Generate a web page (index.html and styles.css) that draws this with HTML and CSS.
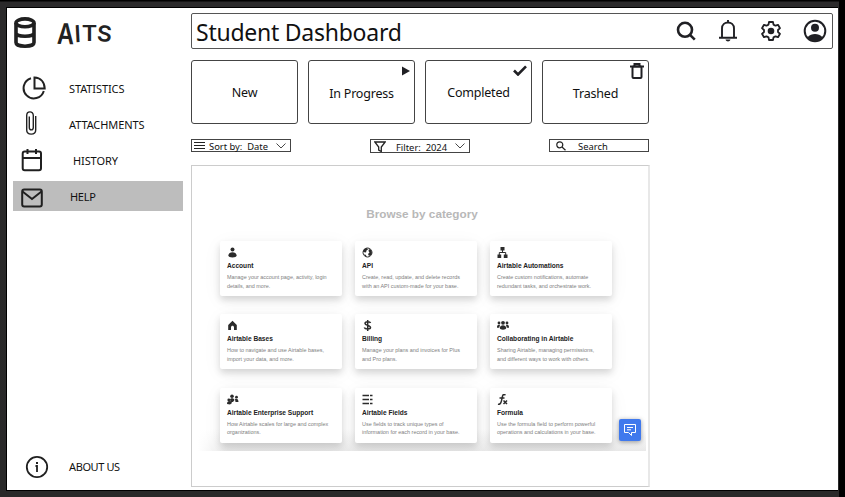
FILE: index.html
```html
<!DOCTYPE html>
<html lang="en">
<head>
<meta charset="utf-8">
<title>Student Dashboard</title>
<link rel="stylesheet" href="styles.css">
</head>
<body>
<div class="screen">
  <aside class="sidebar">
    <div class="brand">
      <svg width="24" height="32" viewBox="0 0 24 32" fill="none" stroke="#202020" stroke-width="3.6"><ellipse cx="12" cy="5.800" rx="9" ry="3.900"/><path d="M3 6v19.500c0 5 18 5 18 0V6M3 15.800c0 4.600 18 4.600 18 0"/></svg>
      <div class="brand-name"><span class="la">A</span><span class="li">I</span><span class="lt">T</span><span class="ls">S</span></div>
    </div>
    <nav class="nav">
      <a class="row statistics"><svg width="24" height="24" viewBox="0 0 24 24" fill="none" stroke="#222" stroke-width="2"><path d="M9 2.200A10.300 10.300 0 1 0 21.800 15M12.500 1.500v11h10.200C22.500 6 18.500 1.800 12.500 1.500z"/></svg><span>STATISTICS</span></a>
      <a class="row attachments"><svg width="12" height="24" viewBox="0 0 12 24" fill="none" stroke="#222" stroke-width="1.400"><path d="M10.700 5v14c0 5.500-9 5.500-9 0V4.500C1.700-.3 8.300-.3 8.300 4.500V16.500c0 3.200-4 3.200-4 0V5.500"/></svg><span>ATTACHMENTS</span></a>
      <a class="row history"><svg width="22" height="24" viewBox="0 0 22 24" fill="none" stroke="#202020" stroke-width="2"><rect x="1.700" y="3.500" width="18.300" height="18.800" rx="2"/><path d="M2 10h18M6.500 1v5M15 1v5"/></svg><span>HISTORY</span></a>
      <a class="row help"><svg width="22" height="20" viewBox="0 0 22 20" fill="none" stroke="#202020" stroke-width="2"><rect x="1.200" y="1.500" width="19.600" height="17" rx="2"/><path d="M1.500 3.500L11 11l9.500-7.500"/></svg><span>HELP</span></a>
    </nav>
    <a class="row about"><svg width="24" height="24" viewBox="0 0 24 24" fill="none" stroke="#202020" stroke-width="1.800"><circle cx="12" cy="12" r="10.200"/><path d="M10.500 11H12v6"/><path d="M12 7v2" stroke-width="2"/></svg><span>ABOUT US</span></a>
  </aside>

  <main class="main">
    <header class="topbar">
      <h1>Student Dashboard</h1>
      <div class="tools">
        <svg width="20" height="20" viewBox="0 0 20 20" fill="none" stroke="#202024" stroke-width="2.600"><circle cx="9" cy="8.800" r="7"/><path d="M14 13.800l4.800 4.800"/></svg>
        <svg width="20" height="24" viewBox="0 0 20 24" fill="none" stroke="#202024" stroke-width="1.900"><path d="M1 18.800h18M4 18.500V9.500C4 1.500 16 1.500 16 9.500v9M10 1v3"/><path d="M7.500 20.500h5c-.5 2.500-4.500 2.500-5 0z" fill="#202024" stroke="none"/></svg>
        <svg width="20" height="20" viewBox="0 0 20 20" fill="none" stroke="#202024" stroke-width="1.800"><path d="M8 1h4l.5 2.600 2 1.100L17 3.800l2 3.400-2 1.800v2l2 1.800-2 3.400-2.500-.9-2 1.100L12 19H8l-.5-2.600-2-1.100-2.500.9-2-3.400L3 11V9L1 7.200l2-3.400 2.500.9 2-1.100z" stroke-linejoin="round"/><circle cx="10" cy="10" r="3.300" fill="#202024" stroke="none"/></svg>
        <svg width="24" height="24" viewBox="0 0 24 24"><circle cx="12" cy="12" r="10.300" fill="none" stroke="#202024" stroke-width="2"/><circle cx="12" cy="8.800" r="4" fill="#202024"/><path d="M4.500 18.200c4-4.200 11-4.200 15 0-3.500 5-11.500 5-15 0z" fill="#202024"/></svg>
      </div>
    </header>

    <section class="status">
      <div class="tile new"><span>New</span></div>
      <div class="tile progress"><span>In Progress</span><svg class="mark" width="8" height="10" viewBox="0 0 8 10"><path d="M0 .5L8 5 0 9.500z" fill="#202024"/></svg></div>
      <div class="tile completed"><span>Completed</span><svg class="mark" width="14" height="11" viewBox="0 0 14 11"><path d="M1 5.500l4 4L13 1.300" fill="none" stroke="#202024" stroke-width="2.600"/></svg></div>
      <div class="tile trashed"><span>Trashed</span><svg class="mark" width="14" height="16" viewBox="0 0 14 16" fill="none" stroke="#202024" stroke-width="2"><path d="M0 3.500h14M4.500 3V1h5v2"/><rect x="2.500" y="3.500" width="9" height="11.500" rx="1"/></svg></div>
    </section>

    <section class="filters">
      <div class="control sort"><svg width="11" height="7" viewBox="0 0 11 7" stroke="#222" stroke-width="1"><path d="M0 .5h11M0 3.500h11M0 6.500h11"/></svg><span>Sort by:&nbsp; Date</span><svg class="chevron" width="10" height="6" viewBox="0 0 10 6" fill="none" stroke="#333" stroke-width=".9"><path d="M.5.5L5 5 9.500.5"/></svg></div>
      <div class="control filter"><svg width="12" height="11" viewBox="0 0 12 11" fill="none" stroke="#222" stroke-width="1.300"><path d="M.8 1h10.400L7.300 6v4.500L4.700 9V6z"/></svg><span>Filter:&nbsp; 2024</span><svg class="chevron" width="10" height="6" viewBox="0 0 10 6" fill="none" stroke="#333" stroke-width=".9"><path d="M.5.500L5 5 9.500.5"/></svg></div>
      <div class="control search"><svg width="10" height="10" viewBox="0 0 10 10" fill="none" stroke="#222" stroke-width="1.200"><circle cx="3.800" cy="3.800" r="3"/><path d="M6 6l3.500 3.300"/></svg><span>Search</span></div>
    </section>

    <section class="panel">
      <div class="help-center">
        <h2>Browse by category</h2>
        <div class="categories">
          <article><svg width="11" height="11" viewBox="0 0 11 11" fill="#2b2b2b"><circle cx="5.500" cy="2.500" r="2"/><path d="M1.300 8.500C1.500 4 9.500 4 9.700 8.500c0 2.500-8.400 2.500-8.400 0z"/></svg><h3>Account</h3><p>Manage your account page, activity, login<br>details, and more.</p></article>
          <article><svg width="11" height="11" viewBox="0 0 11 11"><circle cx="5.500" cy="5.500" r="4.500" fill="#fff" stroke="#2b2b2b"/><path d="M2 2l3-1 1 1.500-1.500 1-.5 2L1 5zM7 2l2 1 1 3-1 2-2 1-1-2 1.500-1.500L6.500 4zM2 7l2 1 .5 2L3 9z" fill="#2b2b2b"/></svg><h3>API</h3><p>Create, read, update, and delete records<br>with an API custom-made for your base.</p></article>
          <article><svg width="11" height="11" viewBox="0 0 11 11" fill="#2b2b2b"><path d="M3.500 0h4v3.500h-4zM.5 7.500h3.700V11H.5zM6.800 7.500h3.700V11H6.800z"/><path d="M5.500 3v2.500M2.300 8V5.500h6.400V8" fill="none" stroke="#2b2b2b"/></svg><h3>Airtable Automations</h3><p>Create custom notifications, automate<br>redundant tasks, and orchestrate work.</p></article>
          <article><svg width="11" height="11" viewBox="0 0 11 11" fill="#2b2b2b"><path d="M1.200 5L5.500.7 9.800 5v5H7V7.500C7 5.300 4 5.300 4 7.500V10H1.200z"/></svg><h3>Airtable Bases</h3><p>How to navigate and use Airtable bases,<br>import your data, and more.</p></article>
          <article><svg width="11" height="11" viewBox="0 0 11 11" fill="none" stroke="#2b2b2b" stroke-width="1.500"><path d="M8.500 3C8 1.300 3 1.300 3 3.500c0 2.300 5.500 1.500 5.500 4C8.500 9.500 3 9.500 2.300 7.500M5.700 0v11"/></svg><h3>Billing</h3><p>Manage your plans and invoices for Plus<br>and Pro plans.</p></article>
          <article><svg width="12" height="11" viewBox="0 0 12 11" fill="#2b2b2b"><circle cx="6" cy="2.800" r="1.900"/><circle cx="2" cy="3" r="1.400"/><circle cx="10" cy="3" r="1.400"/><path d="M2.800 8C3 4.300 9 4.300 9.200 8c0 2.300-6.400 2.300-6.400 0zM0 7c0-2 1.500-2.500 3-2L2.200 7.800H0zM12 7c0-2-1.500-2.500-3-2l.8 2.800H12z"/></svg><h3>Collaborating in Airtable</h3><p>Sharing Airtable, managing permissions,<br>and different ways to work with others.</p></article>
          <article><svg width="12" height="11" viewBox="0 0 12 11" fill="#2b2b2b"><circle cx="5" cy="2.300" r="1.800"/><circle cx="9.500" cy="3.200" r="1.400"/><circle cx="1.800" cy="6" r="1.400"/><path d="M3 6c0-2.500 4-2.500 4.500 0L6 8H4zM8 5c2-.8 3.500.5 3.500 3H8.500zM0 10c0-4 4.500-3.500 5-1l-2 1.500z"/></svg><h3>Airtable Enterprise Support</h3><p>How Airtable scales for large and complex<br>organizations.</p></article>
          <article><svg width="11" height="11" viewBox="0 0 11 11" stroke="#2b2b2b" stroke-width="1.300"><path d="M.5 1.500H7M.5 5.500H7M.5 9.500H7M8 1.500h2.500M8 5.500h2.500M8 9.500h2.500"/></svg><h3>Airtable Fields</h3><p>Use fields to track unique types of<br>information for each record in your base.</p></article>
          <article><svg width="11" height="11" viewBox="0 0 11 11" fill="none" stroke="#2b2b2b" stroke-width="1.500"><path d="M8.500 1C6-.5 5.500 1.500 5 4.500S3.500 11 1 10.200M2.500 4h5M6.500 6.500l3.500 3.500M10 6.500L6.500 10"/></svg><h3>Formula</h3><p>Use the formula field to perform powerful<br>operations and calculations in your base.</p></article>
        </div>
        <button class="chat" aria-label="Chat"><svg width="14" height="14" viewBox="0 0 14 14" fill="none" stroke="#fff" stroke-width="1"><path d="M1.500 1.500h11v8H8.500V12.500L5.500 9.500h-4zM4 4.500h6M4 6.800h4"/></svg></button>
      </div>
    </section>
  </main>
</div>
</body>
</html>
```
FILE: styles.css
```css
* { box-sizing: border-box; }
body {
  margin: 0;
  width: 845px;
  height: 497px;
  padding: 7px 7px 6px 6px;
  overflow: hidden;
  background: linear-gradient(to bottom, #000 0, #000 1px, #2b2a2b 2px, #292929 100%);
  box-shadow: inset -6px 0 #000;
  font-family: "Noto Sans", sans-serif;
  color: #111;
}
.screen {
  width: 832px;
  height: 484px;
  border: 1px solid #000;
  border-right: 0;
  background: #fff;
  display: flex;
}
h1, h2, h3, p { margin: 0; font-weight: 400; }
svg { display: block; flex: none; }

.sidebar {
  width: 184px;
  padding: 9px 8px 8px 6px;
  display: flex;
  flex-direction: column;
}
.brand { display: flex; height: 32px; }
.brand-name {
  display: flex;
  margin: 0 0 0 20px;
  font: 600 26px/34px "Inter", sans-serif;
  color: #222;
}
.brand-name span { display: inline-block; }
.la { width: 17px; transform: rotate(2deg) scale(.9, 1.1); transform-origin: 0 60%; }
.li { width: 7px; transform: rotate(-3deg) scale(.85, .9); }
.lt { width: 15px; transform: scale(.9, .8); }
.ls { transform: rotate(4deg) scale(.88, .85); }

.nav {
  margin-top: 24px;
  display: flex;
  flex-direction: column;
  gap: 6px;
}
.row {
  height: 30px;
  display: flex;
  align-items: center;
  font-size: 11px;
  line-height: 14px;
  letter-spacing: -.1px;
}
.statistics { padding-left: 9px; gap: 23px; }
.statistics span { padding-top: 2px; }
.attachments { padding-left: 12px; gap: 32px; }
.attachments svg { margin-top: -3px; }
.attachments span { padding-top: 2px; }
.history { padding-left: 8px; gap: 30px; }
.history span { padding-top: 2px; }
.help { padding-left: 8px; gap: 27px; background: #bdbdbd; letter-spacing: -.3px; }
.help svg { margin-top: 3px; }
.help span { padding-top: 1px; }
.about { margin-top: auto; padding-left: 12px; gap: 20px; letter-spacing: -.4px; }

.main { width: 642px; padding-top: 5px; }
.topbar {
  height: 36px;
  padding: 0 5px 0 4px;
  border: 1px solid #555;
  border-radius: 2px;
  display: flex;
  align-items: center;
  justify-content: space-between;
}
h1 { font-size: 23px; line-height: 32px; padding-top: 2px; letter-spacing: -.25px; }
.tools { display: flex; align-items: center; gap: 22.500px; }

.status {
  width: 458px;
  margin-top: 11px;
  display: grid;
  grid-template-columns: repeat(4, 107px);
  gap: 10px;
}
.tile {
  position: relative;
  height: 64px;
  border: 1px solid #444;
  border-radius: 3px;
  display: flex;
  align-items: center;
  justify-content: center;
  font-size: 12.500px;
  letter-spacing: -.2px;
}
.progress span, .trashed span { padding-top: 2px; }
.mark { position: absolute; }
.progress .mark { right: 4px; top: 5px; }
.completed .mark { right: 4px; top: 4px; }
.trashed .mark { right: 4px; top: 2px; }

.filters {
  width: 458px;
  height: 14px;
  margin-top: 15px;
  display: flex;
  justify-content: space-between;
}
.control {
  width: 100px;
  height: 13px;
  border: 1px solid #444;
  display: flex;
  align-items: center;
  font-size: 9.4px;
  line-height: 12px;
  white-space: nowrap;
}
.sort { padding-left: 2px; gap: 4px; }
.sort span { padding-top: 2px; }
.filter { height: 14px; padding-left: 3px; }
.filter span { padding-top: 3px; margin-left: 10px; }
.search { padding-left: 6px; gap: 12px; }
.search span { padding-top: 2px; }
.chevron { margin-left: auto; margin-right: 4px; }

.panel {
  width: 459px;
  height: 322px;
  margin-top: 12px;
  padding: 1px 2px 0 6px;
  border: 1px solid #ccc;
  border-right: 2px solid #e8e8e8;
}
.help-center {
  position: relative;
  height: 284px;
  overflow: hidden;
  font-family: "Liberation Sans", sans-serif;
  background:
    linear-gradient(to right, #fff 0, rgba(255, 255, 255, 0) 30px),
    linear-gradient(to bottom, #fff 262px, #e9e9e9 284px);
}
h2 {
  padding-top: 39px;
  text-align: center;
  font-size: 11.750px;
  line-height: 16px;
  font-weight: 700;
  color: #b8b8b8;
}
.categories {
  margin: 19px 0 0 22px;
  display: grid;
  grid-template-columns: repeat(3, 122px);
  grid-auto-rows: 55px;
  gap: 18.250px 13px;
}
article {
  padding: 6px 7px 0;
  border-radius: 2px;
  background: #fff;
  box-shadow: 0 4px 7px rgba(0, 0, 0, .14), 0 4px 20px rgba(0, 0, 0, .05);
}
h3 {
  margin-top: 4px;
  font-size: 6.600px;
  line-height: 8px;
  font-weight: 700;
  color: #222;
  white-space: nowrap;
}
article p {
  margin-top: 3px;
  font-size: 5.450px;
  line-height: 8.600px;
  color: #808080;
  white-space: nowrap;
}
.chat {
  position: absolute;
  right: 5px;
  bottom: 10px;
  width: 22px;
  height: 22px;
  padding: 4px;
  border: 0;
  border-radius: 2px;
  background: #4079ed;
  box-shadow: 0 1px 5px rgba(0, 0, 0, .4);
}
```
